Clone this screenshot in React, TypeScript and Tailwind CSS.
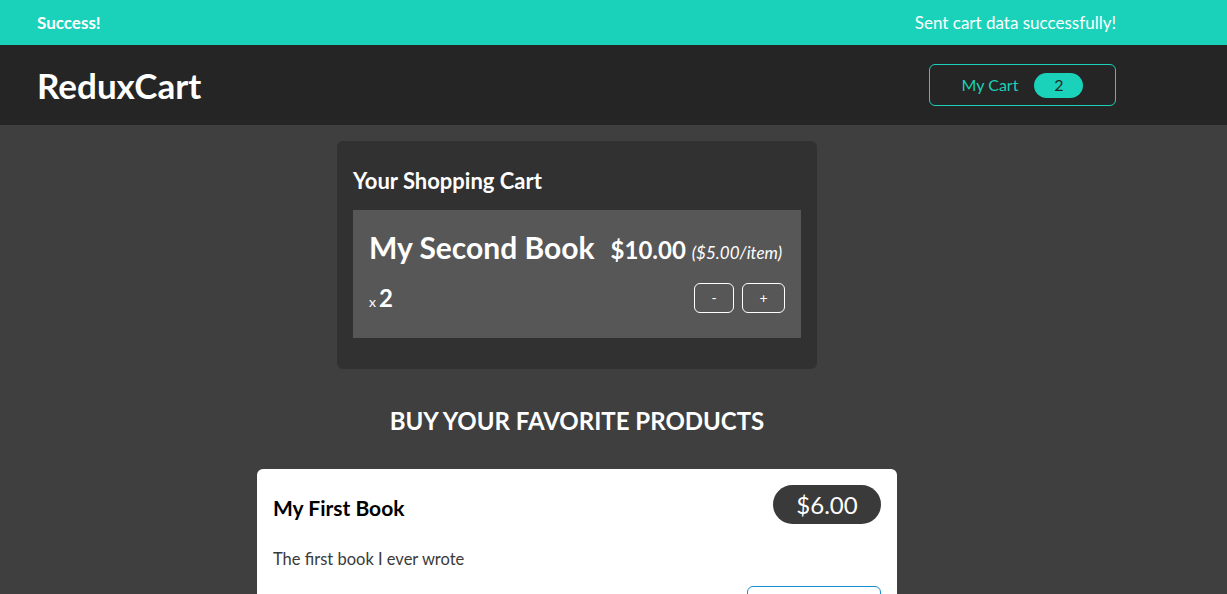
import React from "react";

const cartItems = [
  { id: "b2", title: "My Second Book", quantity: 2, total: 10, price: 5 },
];

const products = [
  { id: "b1", title: "My First Book", price: 6, description: "The first book I ever wrote" },
];

const money = (n: number) => `$${n.toFixed(2)}`;

const App: React.FC = () => {
  return (
    <div className="min-h-screen bg-[#3f3f3f] font-['Lato',sans-serif]">
      {/* Notification bar */}
      <section className="flex h-[45px] items-center justify-between bg-[#1ad1b9] pl-[37px] pr-[111px] text-white">
        <h2 className="text-[17px] font-bold">Success!</h2>
        <p className="text-[17px]">Sent cart data successfully!</p>
      </section>

      {/* Header */}
      <header className="flex h-20 items-center justify-between bg-[#252525] pl-[37px] pr-[111px]">
        <h1 className="text-[35px] font-bold text-white">ReduxCart</h1>
        <button className="flex h-[42px] w-[187px] items-center justify-center gap-4 rounded-md border border-[#1ad1b9] text-base text-[#1ad1b9]">
          <span>My Cart</span>
          <span className="flex h-[25px] w-[49px] items-center justify-center rounded-full bg-[#1ad1b9] text-[#252525]">
            2
          </span>
        </button>
      </header>

      <main className="flex flex-col items-center pr-[73px] pt-4">
        {/* Cart */}
        <section className="w-[480px] rounded-md bg-[#313131] px-4 pb-[31px] pt-[26px] text-white">
          <h2 className="mb-[15px] text-[22px] font-bold leading-7">Your Shopping Cart</h2>
          <ul>
            {cartItems.map((item) => (
              <li key={item.id} className="bg-[#575757] px-4 pb-6 pt-[19px]">
                <header className="flex items-baseline">
                  <h3 className="text-[30px] font-bold leading-9">{item.title}</h3>
                  <div className="ml-4 text-2xl font-bold leading-9">
                    {money(item.total)}{" "}
                    <span className="text-[17px] font-normal italic">({money(item.price)}/item)</span>
                  </div>
                </header>
                <div className="mt-[11px] flex items-center justify-between">
                  <div className="flex items-baseline">
                    <span className="mr-[3px] text-sm">x</span>
                    <span className="text-2xl font-bold">{item.quantity}</span>
                  </div>
                  <div className="flex gap-2">
                    <button className="h-[30px] w-10 rounded-md border border-white text-sm">-</button>
                    <button className="h-[30px] w-[43px] rounded-md border border-white text-sm">+</button>
                  </div>
                </div>
              </li>
            ))}
          </ul>
        </section>

        {/* Products */}
        <section className="mt-9 flex flex-col items-center">
          <h2 className="text-2xl font-bold uppercase leading-8 text-white">Buy your favorite products</h2>
          <ul className="mt-8">
            {products.map((p) => (
              <li key={p.id} className="w-[640px] rounded-md bg-white p-4">
                <header className="flex items-center justify-between">
                  <h3 className="mt-[6px] text-[21px] font-bold leading-7 text-black">{p.title}</h3>
                  <div className="flex h-[39px] w-[108px] items-center justify-center rounded-full bg-[#3a3a3a] text-2xl text-white">
                    {money(p.price)}
                  </div>
                </header>
                <p className="mt-[23px] text-[16.5px] leading-6 text-[#3a3a3a]">{p.description}</p>
                <div className="mt-[15px] flex justify-end">
                  <button className="h-[36px] w-[134px] rounded-md border border-[#1a8ed1] text-[#1a8ed1]">Add to Cart</button>
                </div>
              </li>
            ))}
          </ul>
        </section>
      </main>
    </div>
  );
};

export default App;
